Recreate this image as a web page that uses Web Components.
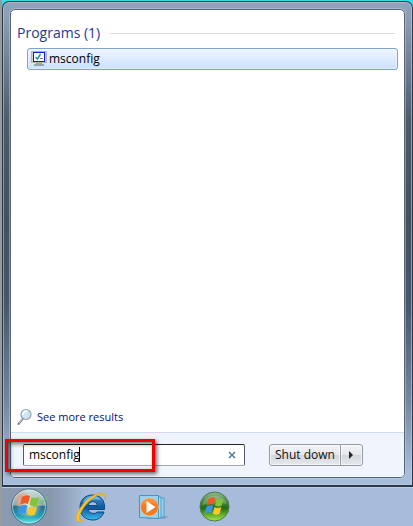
<!DOCTYPE html>
<html lang="en">
<head>
<meta charset="utf-8">
<title>Start menu</title>
<style>
  body {
    margin: 0;
    font-family: "Open Sans", "Noto Sans", sans-serif;
    font-size: 12px;
    line-height: 16px;
    color: #000;
  }
</style>
</head>
<body>
<desk-top>
  <start-menu>
    <result-group heading="Programs (1)">
      <result-item>msconfig</result-item>
    </result-group>
    <more-results slot="more">See more results</more-results>
    <search-box slot="footer" value="msconfig"></search-box>
    <shutdown-button slot="footer">Shut down</shutdown-button>
  </start-menu>
  <task-bar slot="bar"></task-bar>
</desk-top>

<script>
class DeskTop extends HTMLElement {
  constructor() {
    super();
    this.attachShadow({ mode: "open" });
    this.shadowRoot.innerHTML = `
      <style>
        :host {
          display: flex;
          flex-direction: column;
          box-sizing: border-box;
          min-height: 100vh;
          padding-left: 2px;
          background: linear-gradient(to right, #9b9b9b 2px, #32dfe8 2px);
        }
        .work {
          flex: 1;
          display: flex;
          padding-top: 1px;
        }
      </style>
      <div class="work"><slot></slot></div>
      <slot name="bar"></slot>
    `;
  }
}
customElements.define("desk-top", DeskTop);

class StartMenu extends HTMLElement {
  constructor() {
    super();
    this.attachShadow({ mode: "open" });
    this.shadowRoot.innerHTML = `
      <style>
        :host {
          flex: 1;
          display: flex;
          box-sizing: border-box;
          padding: 7px;
          border: 1px solid #2d3949;
          border-bottom-width: 2px;
          border-radius: 7px 7px 0 0;
          background: linear-gradient(to bottom, #8fa3bc 0, #8b9db4 16px, #4c5a69 120px, #43515f 220px, #47566a 300px, #7387a0 400px, #a6bddb 470px);
          box-shadow: inset 0 0 0 1px rgba(190, 207, 226, .55);
        }
        .panel {
          flex: 1;
          display: flex;
          flex-direction: column;
          border: 1px solid #566473;
          outline: 1px solid rgba(190, 207, 226, .5);
          border-radius: 5px;
          background: #fff;
        }
        main {
          flex: 1;
          padding: 13px 6px 0;
        }
        footer {
          display: flex;
          align-items: center;
          gap: 24px;
          height: 44px;
          padding-left: 12px;
          border-top: 1px solid #d0dcec;
          border-radius: 0 0 4px 4px;
          background: #f0f4fc;
        }
      </style>
      <div class="panel">
        <main><slot></slot></main>
        <slot name="more"></slot>
        <footer><slot name="footer"></slot></footer>
      </div>
    `;
  }
}
customElements.define("start-menu", StartMenu);

class ResultGroup extends HTMLElement {
  constructor() {
    super();
    this.attachShadow({ mode: "open" });
    this.shadowRoot.innerHTML = `
      <style>
        :host { display: block; }
        h2 {
          display: flex;
          align-items: center;
          gap: 10px;
          margin: 0 3px 5px 0;
          font-size: 14px;
          font-weight: 400;
          line-height: 20px;
          color: #1e3a94;
        }
        h2::after {
          content: "";
          flex: 1;
          height: 1px;
          background: #dedede;
        }
        .items { padding-left: 10px; }
      </style>
      <h2></h2>
      <div class="items"><slot></slot></div>
    `;
  }

  connectedCallback() {
    this.shadowRoot.querySelector("h2").textContent = this.getAttribute("heading");
  }
}
customElements.define("result-group", ResultGroup);

class ResultItem extends HTMLElement {
  constructor() {
    super();
    this.attachShadow({ mode: "open" });
    this.shadowRoot.innerHTML = `
      <style>
        :host { display: block; }
        button {
          display: flex;
          align-items: center;
          gap: 2px;
          width: 100%;
          height: 22px;
          padding: 0 3px;
          border: 1px solid #7da2ce;
          border-radius: 3px;
          background: linear-gradient(#eef5ff, #cde1fc);
          box-shadow: inset 0 0 0 1px rgba(255, 255, 255, .4);
          font: inherit;
          color: inherit;
        }
      </style>
      <button>
        <svg width="16" height="16" viewBox="0 0 16 16" aria-hidden="true">
          <path d="M5 12h6v1h2v2H3v-2h2z" fill="#a3a29c"/>
          <rect x=".5" y=".5" width="15" height="11" fill="#d3d0c8" stroke="#b5b4ae"/>
          <rect x="2.500" y="1.500" width="11" height="9" fill="#fff" stroke="#1118d8"/>
          <path d="M4.500 6l2 2 3-5" fill="none" stroke="#2b8fa8" stroke-width="1.500"/>
          <path d="M9 7.500h3" stroke="#777"/>
        </svg>
        <span><slot></slot></span>
      </button>
    `;
  }
}
customElements.define("result-item", ResultItem);

class MoreResults extends HTMLElement {
  constructor() {
    super();
    this.attachShadow({ mode: "open" });
    this.shadowRoot.innerHTML = `
      <style>
        :host {
          display: flex;
          padding: 0 6px 6px;
          font-size: 11px;
        }
        a {
          display: flex;
          align-items: center;
          gap: 4px;
          color: #06107a;
          text-decoration: none;
        }
      </style>
      <a href="#results">
        <svg width="16" height="18" viewBox="0 0 16 18" aria-hidden="true">
          <path d="M6 10.500L1.500 16" stroke="#85898d" stroke-width="2" stroke-linecap="round"/>
          <path d="M5.500 10.500L2 15" stroke="#d2d5d8"/>
          <circle cx="9" cy="6.500" r="5" fill="#c9e6f9" stroke="#9aa3ac" stroke-width="1.200"/>
          <path d="M6 7a3 3 0 0 1 4-3.500" fill="none" stroke="#fff" stroke-width="2"/>
        </svg>
        <span><slot></slot></span>
      </a>
    `;
  }
}
customElements.define("more-results", MoreResults);

class SearchBox extends HTMLElement {
  constructor() {
    super();
    this.attachShadow({ mode: "open" });
    this.shadowRoot.innerHTML = `
      <style>
        :host {
          position: relative;
          flex: 0 1 222px;
          min-width: 0;
        }
        .field {
          display: flex;
          align-items: center;
          box-sizing: border-box;
          height: 22px;
          border: 1px solid #555a60;
          border-top-color: #222;
          border-bottom-color: #a5a9ae;
          border-radius: 2px;
          background: #fff;
        }
        input {
          flex: 1;
          min-width: 0;
          padding: 0 0 0 5px;
          border: 0;
          outline: 0;
          background: none;
          font: inherit;
          color: inherit;
          caret-color: transparent;
        }
        button {
          display: flex;
          padding: 0 8px;
          border: 0;
          background: none;
        }
        .caret {
          position: absolute;
          left: 56px;
          top: 3px;
          width: 1px;
          height: 15px;
          background: #000;
        }
        .mark {
          position: absolute;
          left: -18px;
          top: -5px;
          box-sizing: border-box;
          width: 150px;
          height: 33px;
          border: 3px solid #f00000;
          box-shadow: 2px 2px 4px rgba(0, 0, 0, .6), inset 2px 2px 4px rgba(0, 0, 0, .55);
          pointer-events: none;
        }
      </style>
      <div class="field">
        <input type="text" aria-label="Search programs and files">
        <button aria-label="Clear search">
          <svg width="8" height="8" viewBox="0 0 8 8" aria-hidden="true">
            <path d="M1 1l6 6M7 1L1 7" stroke="#49759f" stroke-width="1.400"/>
          </svg>
        </button>
      </div>
      <span class="caret"></span>
      <span class="mark"></span>
    `;
  }

  connectedCallback() {
    const input = this.shadowRoot.querySelector("input");
    input.value = this.getAttribute("value") || "";
    this.shadowRoot.querySelector("button").onclick = () => {
      input.value = "";
      input.focus();
    };
  }
}
customElements.define("search-box", SearchBox);

class ShutdownButton extends HTMLElement {
  constructor() {
    super();
    this.attachShadow({ mode: "open" });
    this.shadowRoot.innerHTML = `
      <style>
        :host {
          display: flex;
          flex: none;
        }
        button {
          height: 22px;
          padding: 0 5px;
          border: 1px solid #979ba2;
          border-radius: 3px 0 0 3px;
          background: linear-gradient(#f3f4f6, #e6e8eb 50%, #d3d6da 50%, #e6e9ee);
          box-shadow: inset 0 0 0 1px rgba(255, 255, 255, .6);
          font: inherit;
          color: #111;
          white-space: nowrap;
        }
        .more {
          display: flex;
          align-items: center;
          justify-content: center;
          width: 23px;
          margin-left: -1px;
          border-radius: 0 3px 3px 0;
        }
      </style>
      <button><slot></slot></button>
      <button class="more" aria-label="More shut down options">
        <svg width="4" height="8" viewBox="0 0 4 8" aria-hidden="true">
          <path d="M0 0l4 4-4 4z" fill="#222"/>
        </svg>
      </button>
    `;
  }
}
customElements.define("shutdown-button", ShutdownButton);

// four panes of the waving flag, shared by both round icons
const flag = `
  <path d="M11 9q4-3 8-1l-2 8q-4-2-8 1z" fill="#ef5a24"/>
  <path d="M20.500 9q4 2 8 0l-2 8q-4 2-8 0z" fill="#82c43c"/>
  <path d="M8.500 18.500q4-3 8-1l-2 8q-4-2-8 1z" fill="#3d94e4"/>
  <path d="M18 18.500q4 2 8 0l-2 8q-4 2-8 0z" fill="#fbc727"/>
`;

class TaskBar extends HTMLElement {
  constructor() {
    super();
    this.attachShadow({ mode: "open" });
    this.shadowRoot.innerHTML = `
      <style>
        :host {
          display: flex;
          align-items: center;
          box-sizing: border-box;
          height: 39px;
          padding-left: 8px;
          border-top: 1px solid #bccde2;
          background: linear-gradient(to right, #8a9ab0 0, #8797ae 50px, #a6bcda 84px);
        }
        button {
          display: flex;
          justify-content: center;
          width: 62px;
          padding: 0;
          border: 0;
          background: none;
        }
        .start {
          width: 38px;
          margin-right: 12px;
        }
        svg { display: block; }
      </style>
      <button class="start" aria-label="Start">
        <svg width="38" height="38" viewBox="0 0 38 38" aria-hidden="true">
          <defs>
            <linearGradient id="orb" x1="0" y1="0" x2="0" y2="1">
              <stop offset="0" stop-color="#d9e0dc"/>
              <stop offset=".46" stop-color="#87a9b0"/>
              <stop offset=".5" stop-color="#28708e"/>
              <stop offset=".8" stop-color="#23a5ba"/>
              <stop offset="1" stop-color="#74f3e8"/>
            </linearGradient>
            <radialGradient id="glow">
              <stop offset="0" stop-color="#fff9c8" stop-opacity=".9"/>
              <stop offset="1" stop-color="#fff9c8" stop-opacity="0"/>
            </radialGradient>
            <radialGradient id="warm">
              <stop offset="0" stop-color="#f08a68" stop-opacity=".8"/>
              <stop offset="1" stop-color="#f08a68" stop-opacity="0"/>
            </radialGradient>
          </defs>
          <circle cx="19" cy="18.500" r="17.500" fill="url(#orb)" stroke="#3f7188"/>
          <circle cx="19" cy="18.500" r="16.500" fill="none" stroke="#d5eff0" stroke-opacity=".6"/>
          <circle cx="12" cy="11" r="9" fill="url(#warm)"/>
          <circle cx="19" cy="18" r="13" fill="url(#glow)"/>
          <g transform="translate(1 0)">${flag}</g>
          <path d="M29 13q5-1 9-6-2 8-9 9z" fill="#66c66a" opacity=".6"/>
        </svg>
      </button>
      <button aria-label="Internet Explorer">
        <svg width="32" height="32" viewBox="0 0 32 32" aria-hidden="true">
          <defs>
            <linearGradient id="ie" x1="0" y1="0" x2="0" y2="1">
              <stop offset="0" stop-color="#3fa0de"/>
              <stop offset=".5" stop-color="#10549a"/>
              <stop offset="1" stop-color="#38bced"/>
            </linearGradient>
          </defs>
          <path d="M29.500 18.500H13q1 4 5 4 3 0 4.500-1.500H29c-2 5.500-6 8-11 8C10 29 5 24 5 16.500S10 4 17.500 4s13 5 12 14.500zM13 14.500h9.500q-.5-4-4.500-4t-5 4z" fill="url(#ie)" fill-rule="evenodd" stroke="#124680"/>
          <path d="M8 11q4-6 10-6 5 0 8 4-9-2-14 2-2 1-4 0z" fill="#a9e0fa" opacity=".5"/>
          <path d="M30 9Q33 1 25 2C14 4 2 18 1 27q0 6 8 2-5 1-5-2C6 17 17 5 26 3q5 0 4 6z" fill="#fac42c" stroke="#e0a21c" stroke-width=".6"/>
        </svg>
      </button>
      <button aria-label="Windows Media Player">
        <svg width="32" height="32" viewBox="0 0 32 32" aria-hidden="true">
          <path d="M9 28h18l4-2-5-2z" fill="#6d84a0" opacity=".5"/>
          <path d="M10 6l17 1v19l-17 1z" fill="#9bd3ed" stroke="#4e9bc4"/>
          <path d="M6 5l18 1v21l-18-1z" fill="#a8dcf2" stroke="#4e9bc4"/>
          <path d="M2.500 4.500h19v23l-19-1z" fill="#9ad2ec" stroke="#4796c0"/>
          <circle cx="12.500" cy="16" r="9" fill="#f47b20" stroke="#ffd9b4" stroke-width=".5"/>
          <path d="M5 14q2-7 9-7 4 1 6 6-7-2-15 1z" fill="#ffb061" opacity=".4"/>
          <path d="M9.500 10v12l9-6z" fill="#fff"/>
        </svg>
      </button>
      <button aria-label="Windows Media Center">
        <svg width="32" height="32" viewBox="0 0 32 32" aria-hidden="true">
          <defs>
            <linearGradient id="wmc" x1="0" y1="0" x2="0" y2="1">
              <stop offset="0" stop-color="#8fb98a"/>
              <stop offset=".4" stop-color="#3d7f34"/>
              <stop offset=".55" stop-color="#216a14"/>
              <stop offset="1" stop-color="#a6ec45"/>
            </linearGradient>
          </defs>
          <circle cx="15.500" cy="15.500" r="14.500" fill="url(#wmc)" stroke="#4b7a4b"/>
          <path d="M3 14a13 12 0 0 1 25-1q-12-3-25 1z" fill="#fff" opacity=".2"/>
          <g transform="scale(.86)">${flag}</g>
        </svg>
      </button>
    `;
  }
}
customElements.define("task-bar", TaskBar);
</script>
</body>
</html>
